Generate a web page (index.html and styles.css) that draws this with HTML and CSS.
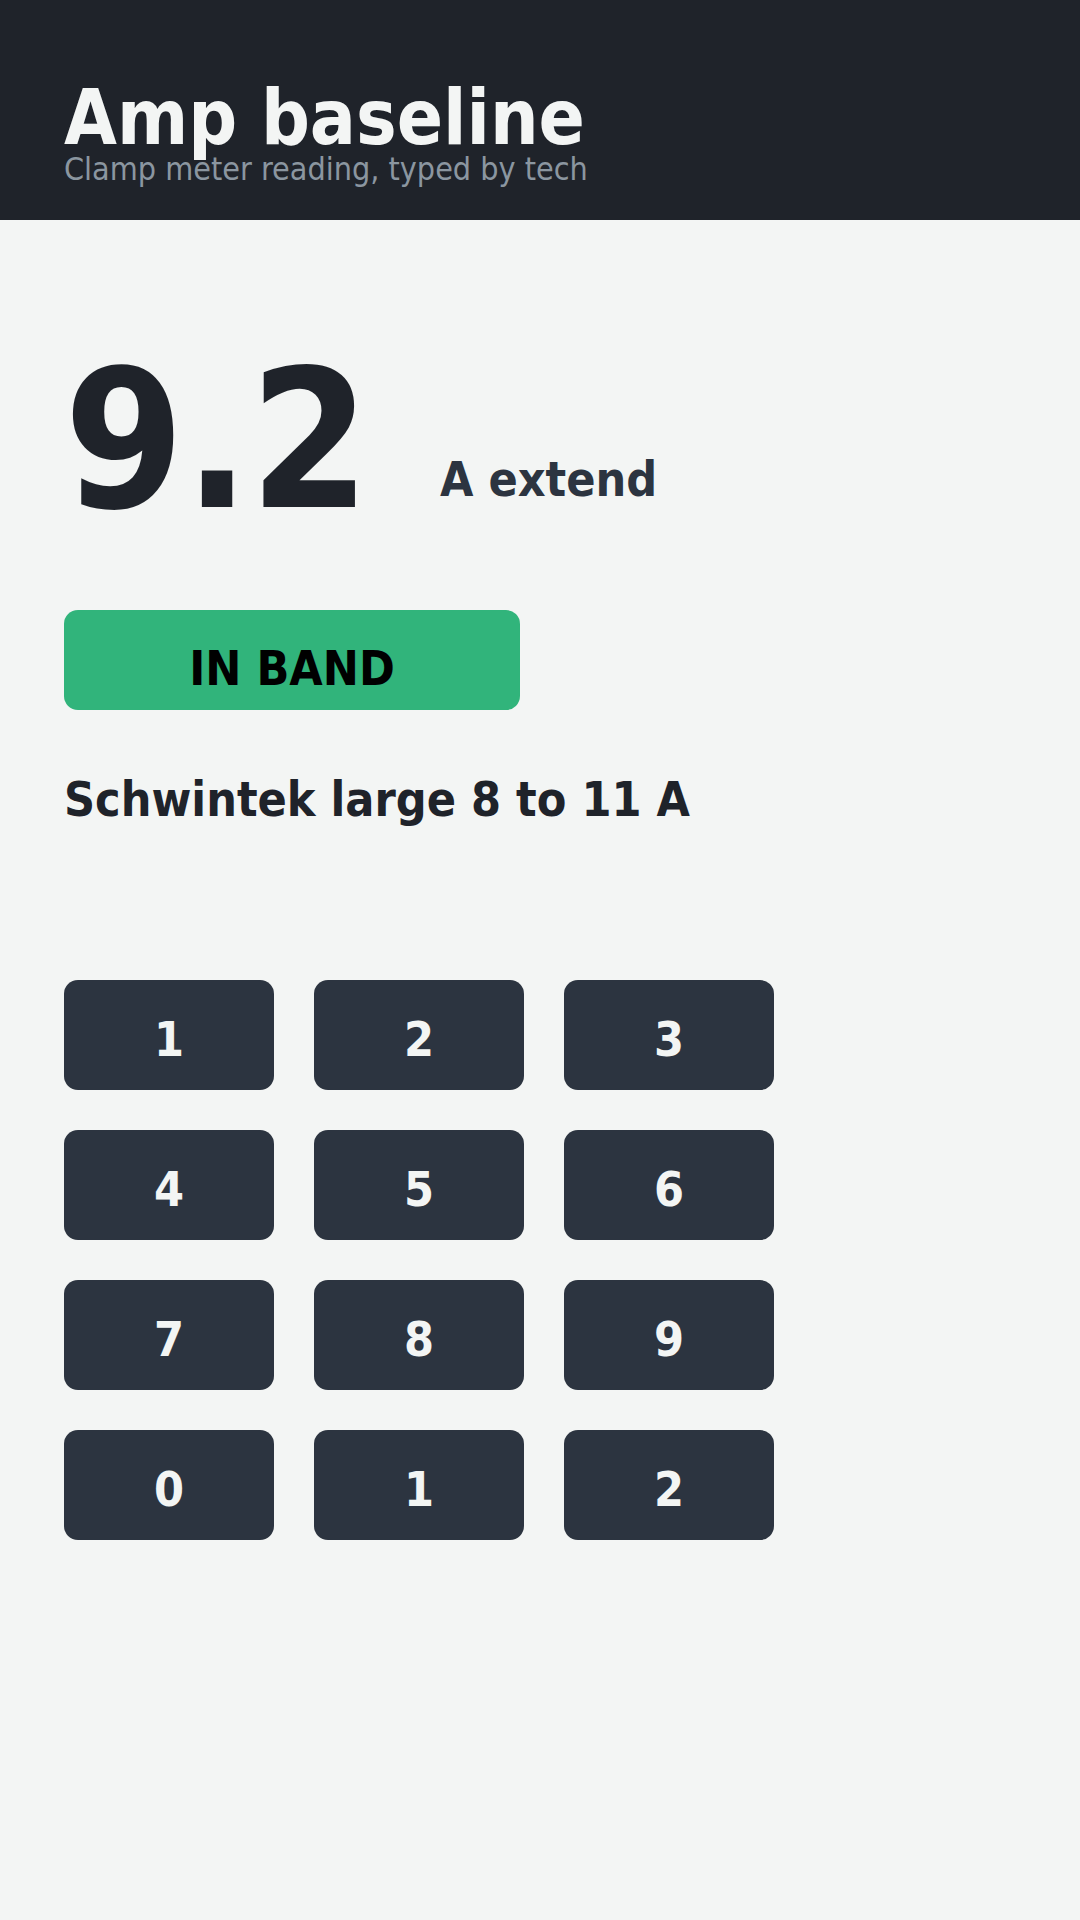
FILE: index.html
```html
<!DOCTYPE html>
<html lang="en">
<head>
<meta charset="utf-8">
<title>Amp baseline</title>
<link rel="stylesheet" href="styles.css">
</head>
<body>
<header class="topbar">
  <h1 class="title">Amp baseline</h1>
  <p class="subtitle">Clamp meter reading, typed by tech</p>
</header>
<main class="content">
  <div class="reading">
    <span class="value">9.2</span>
    <span class="unit">A extend</span>
  </div>
  <div class="status">IN BAND</div>
  <p class="band">Schwintek large 8 to 11 A</p>
  <div class="keypad">
    <button class="key">1</button>
    <button class="key">2</button>
    <button class="key">3</button>
    <button class="key">4</button>
    <button class="key">5</button>
    <button class="key">6</button>
    <button class="key">7</button>
    <button class="key">8</button>
    <button class="key">9</button>
    <button class="key">0</button>
    <button class="key">1</button>
    <button class="key">2</button>
  </div>
</main>
</body>
</html>
```

FILE: styles.css
```css
* { box-sizing: border-box; }

html, body {
  margin: 0;
  padding: 0;
}

body {
  width: 1080px;
  min-height: 1920px;
  background: #f3f5f4;
  font-family: "DejaVu Sans", "Liberation Sans", sans-serif;
  font-stretch: condensed;
  color: #1f232a;
}

.topbar {
  height: 220px;
  background: #1f232a;
  padding: 80px 64px 0;
}

.title {
  margin: 0;
  font-size: 76px;
  line-height: 1;
  font-weight: 700;
  color: #f3f5f4;
}

.subtitle {
  margin: -3px 0 0;
  font-size: 32px;
  line-height: 1;
  font-weight: 400;
  color: #8b96a0;
}

.content {
  padding: 125px 64px 0;
}

.reading {
  display: flex;
  align-items: flex-end;
  gap: 70px;
}

.value {
  font-size: 192px;
  line-height: 1;
  font-weight: 700;
  color: #1f232a;
}

.unit {
  font-size: 48px;
  line-height: 1;
  font-weight: 700;
  color: #2c3440;
  margin-bottom: 34px;
}

.status {
  margin-top: 73px;
  width: 456px;
  height: 100px;
  padding-top: 16px;
  border-radius: 14px;
  background: #31b47b;
  color: #000;
  font-size: 48px;
  font-weight: 700;
  display: flex;
  align-items: center;
  justify-content: center;
  line-height: 1;
}

.band {
  margin: 65px 0 0;
  font-size: 48px;
  line-height: 1;
  font-weight: 700;
  color: #1f232a;
}

.keypad {
  margin-top: 157px;
  display: grid;
  grid-template-columns: repeat(3, 210px);
  grid-auto-rows: 110px;
  gap: 40px;
}

.key {
  border: 0;
  border-radius: 14px;
  background: #2c3440;
  color: #f3f5f4;
  font-family: inherit;
  font-stretch: condensed;
  font-size: 48px;
  font-weight: 700;
  line-height: 1;
  padding: 8px 0 0;
  display: flex;
  align-items: center;
  justify-content: center;
}
```
